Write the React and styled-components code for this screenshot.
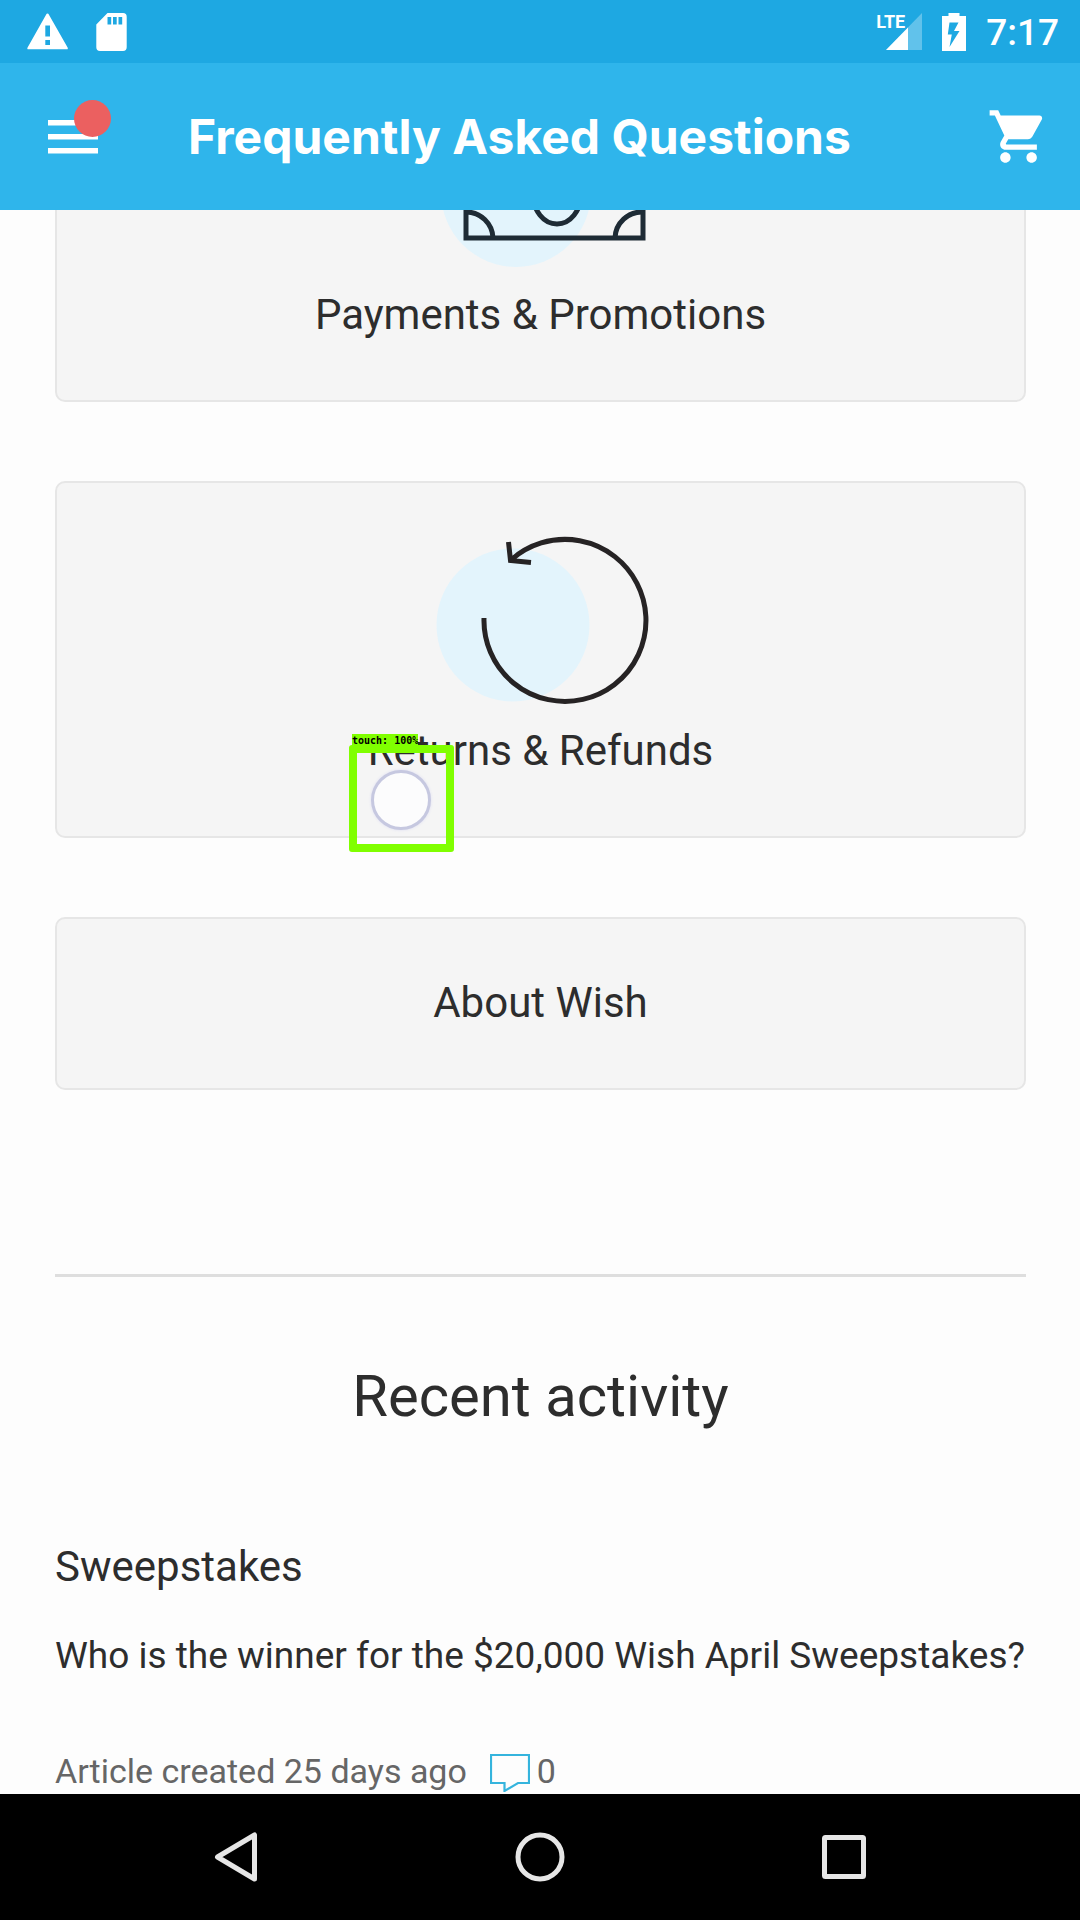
import React from "react";
import styled, { createGlobalStyle } from "styled-components";

const GlobalStyle = createGlobalStyle`
  *, *::before, *::after { box-sizing: border-box; }
  body {
    margin: 0;
    background: #fdfdfd;
    color: #2d2d2d;
    font-family: Roboto, "Noto Sans", sans-serif;
  }
  svg { display: block; flex: none; }
`;

const Screen = styled.div`
  position: relative;
  display: flex;
  flex-direction: column;
  height: 100vh;
  overflow: hidden;
`;

const StatusBar = styled.div`
  flex: none;
  display: flex;
  align-items: center;
  justify-content: space-between;
  height: 63px;
  padding: 0 21px 0 27px;
  background: #1ea8e2;
  color: #fff;
`;

const StatusGroup = styled.div`
  display: flex;
  align-items: center;
  gap: ${(p) => p.$gap}px;
`;

const NetworkLabel = styled.span`
  position: absolute;
  top: 0;
  left: 0;
  font: 700 18px/18px Roboto, sans-serif;
`;

const Network = styled.div`
  position: relative;
  padding-left: 10px;
`;

const Clock = styled.time`
  padding-top: 2px;
  font-size: 37px;
  line-height: 44px;
  font-weight: 500;
`;

const AppBar = styled.header`
  flex: none;
  display: flex;
  align-items: center;
  height: 147px;
  padding: 0 30px 0 48px;
  background: #2fb5eb;
  color: #fff;
`;

const IconButton = styled.button`
  position: relative;
  display: block;
  padding: 0;
  border: 0;
  background: none;
  color: inherit;
`;

const Badge = styled.span`
  position: absolute;
  top: -20px;
  left: 26px;
  width: 37px;
  height: 37px;
  border-radius: 50%;
  background: #eb6060;
`;

const Title = styled.h1`
  flex: 1;
  margin: 0 0 0 90px;
  font: 700 48px/60px Inter, sans-serif;
  white-space: nowrap;
`;

const Viewport = styled.main`
  flex: 1;
  min-height: 0;
  overflow: hidden;
`;

const Page = styled.div`
  margin-top: -165px;
  padding: 0 54px 0 55px;
`;

const Topics = styled.nav`
  display: flex;
  flex-direction: column;
  gap: 79px;
`;

const TopicCard = styled.a`
  display: flex;
  flex-direction: column;
  align-items: center;
  padding: 52px 20px 54px;
  border: 2px solid #e6e6e6;
  border-radius: 10px;
  background: #f5f5f5;
  color: inherit;
  font-size: 42px;
  line-height: 63px;
  text-decoration: none;
`;

const Activity = styled.section`
  margin-top: 184px;
  border-top: 3px solid #dedede;
  padding-top: 76px;
`;

const ActivityTitle = styled.h2`
  margin: 0 0 95px;
  font-size: 58px;
  line-height: 87px;
  font-weight: 400;
  text-align: center;
`;

const SectionName = styled.h3`
  margin: 0 0 30px;
  font-size: 42px;
  line-height: 63px;
  font-weight: 400;
`;

const ArticleLink = styled.a`
  display: block;
  color: inherit;
  font-size: 37px;
  line-height: 55px;
  text-decoration: none;
  white-space: nowrap;
`;

const Meta = styled.div`
  display: flex;
  align-items: center;
  margin-top: 63px;
  color: #666;
  font-size: 34px;
  line-height: 51px;
`;

const Comments = styled.span`
  display: flex;
  align-items: center;
  gap: 7px;
  margin-left: 23px;
`;

const NavBar = styled.nav`
  flex: none;
  display: flex;
  height: 126px;
  padding: 0 84px;
  background: #000;
`;

const NavButton = styled.button`
  flex: 1;
  display: flex;
  align-items: center;
  justify-content: center;
  padding: 0;
  border: 0;
  background: none;
`;

const TouchMarker = styled.div`
  position: absolute;
  top: 745px;
  left: 349px;
  display: flex;
  align-items: center;
  justify-content: center;
  width: 105px;
  height: 107px;
  border: 8px solid #80ff00;
  border-radius: 3px;
  pointer-events: none;
`;

const TouchLabel = styled.span`
  position: absolute;
  left: -5px;
  bottom: 96px;
  background: #80ff00;
  color: #000;
  font: bold 10px/14px "DejaVu Sans Mono", monospace;
  white-space: nowrap;
`;

const TouchDot = styled.span`
  width: 60px;
  height: 60px;
  margin: 2px 2px 0 0;
  border: 3px solid #c6c8e0;
  border-radius: 50%;
  background: #fcfcfd;
  box-shadow: 0 0 3px #dcdcf2;
`;

const WarningIcon = () => (
  <svg width="41" height="38" viewBox="0 0 41 38" fill="#fff">
    <path fillRule="evenodd" d="M20.500.5c.7 0 1 .4 1.300.9l18.800 33.200c.5.9.2 1.700-.8 1.700H1.400c-1 0-1.400-.8-.8-1.700L19.200 1.400c.3-.5.6-.9 1.300-.9zM18.300 12.500v11h4.700v-11zM18.300 27v5h4.700v-5z" />
  </svg>
);

const SdIcon = () => (
  <svg width="31" height="38" viewBox="0 0 31 38" fill="#fff">
    <path fillRule="evenodd" d="M11.500 0H27a3.700 3.700 0 0 1 3.700 3.700v30.600A3.700 3.700 0 0 1 27 38H4a3.700 3.700 0 0 1-3.700-3.700V11.500zM11.500 4v7.500h3.700V4zM17 4v7.500h3.700V4zM22.500 4v7.500h3.700V4z" />
  </svg>
);

const SignalIcon = () => (
  <svg width="36" height="37" viewBox="0 0 36 37" fill="#fff">
    <path opacity=".3" d="M36 0v37H0z" />
    <path d="M22 14.400V37H0z" />
  </svg>
);

const BatteryIcon = () => (
  <svg width="24" height="38" viewBox="0 0 24 38" fill="#fff">
    <path fillRule="evenodd" d="M6.500 0h11v3H24v35H0V3h6.500zM7.500 9.500L5.800 21.500h4L7.500 34 17.500 18h-5.500l4.500-8.500z" />
  </svg>
);

const MenuIcon = () => (
  <svg width="50" height="34" viewBox="0 0 50 34" fill="#fff">
    <path d="M0 0h50v5.500H0zM0 14h50v5.500H0zM0 28h50v5.500H0z" />
  </svg>
);

const CartIcon = () => (
  <svg width="63" height="63" viewBox="0 0 24 24" fill="#fff">
    <path d="M7 18c-1.100 0-1.990.9-1.990 2S5.900 22 7 22s2-.9 2-2-.9-2-2-2zM1 2v2h2l3.600 7.590-1.350 2.450c-.16.28-.25.61-.25.960 0 1.100.9 2 2 2h12v-2H7.420c-.14 0-.25-.11-.25-.25l.03-.12.900-1.630h7.450c.75 0 1.410-.41 1.750-1.030l3.580-6.490c.08-.14.12-.31.120-.48 0-.55-.45-1-1-1H5.210l-.94-2H1zm16 16c-1.100 0-1.990.9-1.990 2s.89 2 1.990 2 2-.9 2-2-.9-2-2-2z" />
  </svg>
);

const PaymentsArt = () => (
  <svg width="240" height="184" viewBox="420 99 240 184" fill="none" stroke="#1e2b35" strokeWidth="5">
    <circle cx="515" cy="192" r="75" fill="#e3f4fc" stroke="none" />
    <rect x="465" y="150" width="177" height="88" />
    <path d="M465 212a27 27 0 0 1 27 26M642 212a27 27 0 0 0-28 26M465 177a27 27 0 0 0 27-27M642 177a27 27 0 0 1-28-27" />
    <ellipse cx="556" cy="194" rx="24" ry="30" />
  </svg>
);

const ReturnsArt = () => (
  <svg width="240" height="184" viewBox="420 535 240 184" fill="none" stroke="#262324" strokeWidth="5">
    <circle cx="512" cy="625" r="76.500" fill="#e3f4fc" stroke="none" />
    <path d="M483 618A81 81 0 1 0 510 560M507.500 542l2 18.500 20.500 2" />
  </svg>
);

const CommentIcon = () => (
  <svg width="40" height="40" viewBox="0 0 40 40" fill="none" stroke="#35b4dd" strokeWidth="2.200">
    <path d="M1 3h38v28H28L14.500 39V31H1z" />
  </svg>
);

const topics = [
  { name: "Payments & Promotions", Art: PaymentsArt },
  { name: "Returns & Refunds", Art: ReturnsArt },
  { name: "About Wish" },
];

export default function App() {
  return (
    <Screen>
      <GlobalStyle />
      <StatusBar>
        <StatusGroup $gap={28}>
          <WarningIcon />
          <SdIcon />
        </StatusGroup>
        <StatusGroup $gap={20}>
          <Network>
            <NetworkLabel>LTE</NetworkLabel>
            <SignalIcon />
          </Network>
          <BatteryIcon />
          <Clock>7:17</Clock>
        </StatusGroup>
      </StatusBar>
      <AppBar>
        <IconButton aria-label="Menu">
          <MenuIcon />
          <Badge />
        </IconButton>
        <Title>Frequently Asked Questions</Title>
        <IconButton aria-label="Cart">
          <CartIcon />
        </IconButton>
      </AppBar>
      <Viewport>
        <Page>
          <Topics>
            {topics.map(({ name, Art }) => (
              <TopicCard key={name} href="#">
                {Art && <Art />}
                <span>{name}</span>
              </TopicCard>
            ))}
          </Topics>
          <Activity>
            <ActivityTitle>Recent activity</ActivityTitle>
            <SectionName>Sweepstakes</SectionName>
            <ArticleLink href="#">
              Who is the winner for the $20,000 Wish April Sweepstakes?
            </ArticleLink>
            <Meta>
              <span>Article created 25 days ago</span>
              <Comments>
                <CommentIcon />
                <span>0</span>
              </Comments>
            </Meta>
          </Activity>
        </Page>
      </Viewport>
      <NavBar>
        <NavButton aria-label="Back">
          <svg width="64" height="64" fill="none" stroke="#e6e6e6" strokeWidth="5" strokeLinejoin="round">
            <path d="M50.500 10v44L13.500 32z" />
          </svg>
        </NavButton>
        <NavButton aria-label="Home">
          <svg width="64" height="64" fill="none" stroke="#e6e6e6" strokeWidth="5">
            <circle cx="32" cy="32" r="22" />
          </svg>
        </NavButton>
        <NavButton aria-label="Recent apps">
          <svg width="64" height="64" fill="none" stroke="#e6e6e6" strokeWidth="5">
            <rect x="12.500" y="12.500" width="39" height="39" rx="1" />
          </svg>
        </NavButton>
      </NavBar>
      <TouchMarker>
        <TouchLabel>touch: 100%</TouchLabel>
        <TouchDot />
      </TouchMarker>
    </Screen>
  );
}
